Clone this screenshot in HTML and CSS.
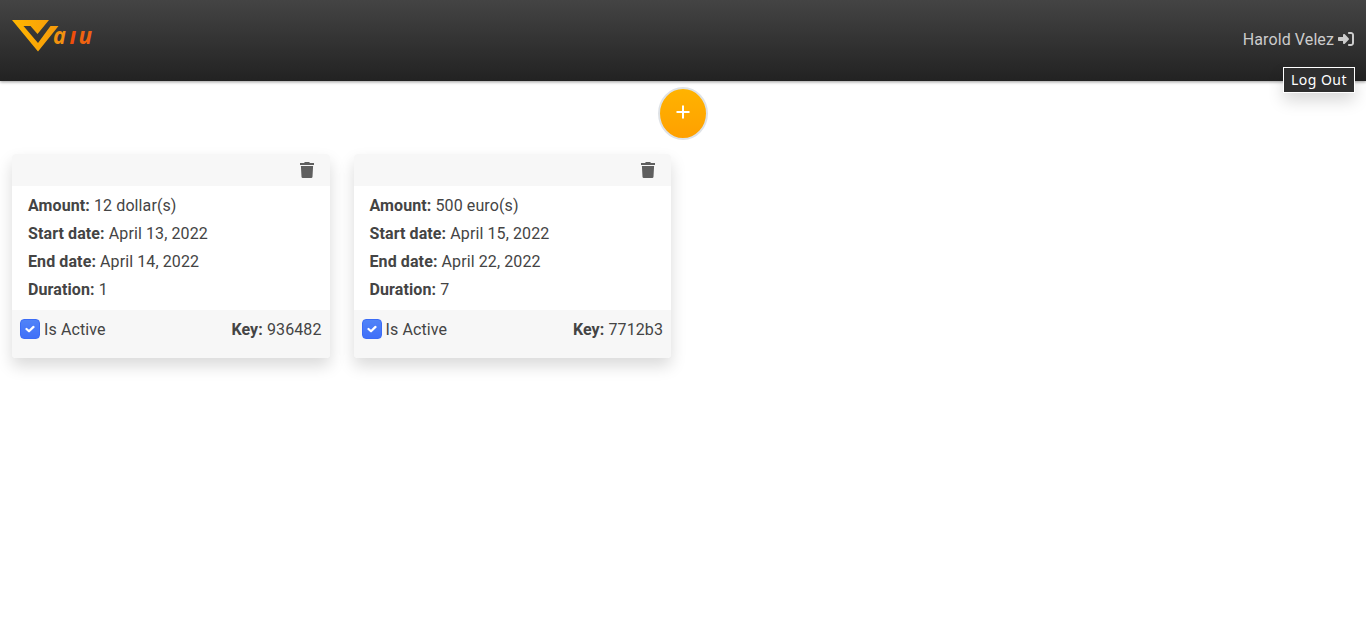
FILE: index.html
```html
<!DOCTYPE html>
<html lang="en">
<head>
<meta charset="utf-8">
<title>Vaiu</title>
<link rel="stylesheet" href="styles.css">
</head>
<body>
<header class="topbar">
  <svg class="logo" width="84" height="36" viewBox="0 0 84 36" role="img" aria-label="Vaiu">
    <defs>
      <linearGradient id="gold" x1="0" y1="0" x2="1" y2="0"><stop offset="0" stop-color="#ffb700"/><stop offset="1" stop-color="#f79a0a"/></linearGradient>
    </defs>
    <path fill="url(#gold)" d="M0 2H37L25.5 16 18.5 8H11.5L26 25 38.5 8H46.500L26 33.500Z"/>
    <text class="logo-text" y="26"><tspan x="41" fill="#f2910f" textLength="13" lengthAdjust="spacingAndGlyphs">a</tspan><tspan x="57.500" fill="#f04e0a">ı</tspan><tspan x="66.500" fill="#ef6310">u</tspan></text>
  </svg>
  <div class="account">
    <span>Harold Velez</span>
    <svg class="exit" width="16" height="16" viewBox="0 0 512 512"><path fill="currentColor" d="M217.900 105.900L340.700 228.700c7.200 7.200 11.300 17.100 11.300 27.300s-4.100 20.100-11.300 27.300L217.900 406.100c-6.400 6.400-15 9.900-24 9.900c-18.700 0-33.900-15.200-33.900-33.900V320H32c-17.700 0-32-14.300-32-32v-64c0-17.700 14.300-32 32-32h128v-62.100c0-18.700 15.200-33.900 33.900-33.900c9 0 17.600 3.600 24 9.900zM352 416h64c17.700 0 32-14.300 32-32V128c0-17.700-14.300-32-32-32h-64c-17.700 0-32-14.300-32-32s14.300-32 32-32h64c53 0 96 43 96 96v256c0 53-43 96-96 96h-64c-17.700 0-32-14.300-32-32s14.300-32 32-32z"/></svg>
    <div class="tooltip">Log Out</div>
  </div>
</header>
<main>
  <div class="actions">
    <button class="add" aria-label="Add"><svg width="14" height="14" viewBox="0 0 14 14"><path d="M7 .5V13.500M.5 7H13.500" stroke="#fff" stroke-width="2"/></svg></button>
  </div>
  <section class="grid">
    <article class="card">
      <div class="card-head"><svg width="14" height="16" viewBox="0 0 14 16"><path fill="currentColor" d="M0 1H4.200L4.700 0H9.300L9.800 1H14V3H0ZM.9 4H13.100L12.500 14.700Q12.400 16 11.200 16H2.800Q1.600 16 1.500 14.700Z"/></svg></div>
      <div class="card-body">
        <p><b>Amount:</b> 12 dollar(s)</p>
        <p><b>Start date:</b> April 13, 2022</p>
        <p><b>End date:</b> April 14, 2022</p>
        <p><b>Duration:</b> 1</p>
      </div>
      <div class="card-foot">
        <div class="active"><span class="check"><svg width="10" height="8" viewBox="0 0 10 8"><path d="M1.500 4 4 6.300 8.500 1.900"/></svg></span>Is Active</div>
        <div><b>Key:</b> 936482</div>
      </div>
    </article>
    <article class="card">
      <div class="card-head"><svg width="14" height="16" viewBox="0 0 14 16"><path fill="currentColor" d="M0 1H4.200L4.700 0H9.300L9.800 1H14V3H0ZM.9 4H13.100L12.500 14.700Q12.400 16 11.200 16H2.800Q1.600 16 1.500 14.700Z"/></svg></div>
      <div class="card-body">
        <p><b>Amount:</b> 500 euro(s)</p>
        <p><b>Start date:</b> April 15, 2022</p>
        <p><b>End date:</b> April 22, 2022</p>
        <p><b>Duration:</b> 7</p>
      </div>
      <div class="card-foot">
        <div class="active"><span class="check"><svg width="10" height="8" viewBox="0 0 10 8"><path d="M1.500 4 4 6.300 8.500 1.900"/></svg></span>Is Active</div>
        <div><b>Key:</b> 7712b3</div>
      </div>
    </article>
  </section>
</main>
</body>
</html>
```
FILE: styles.css
```css
* { box-sizing: border-box; }
body { margin: 0; min-height: 100vh; background: #fff; color: #444; font: 16px/24px Roboto, sans-serif; letter-spacing: .1px; }
p { margin: 0; }
.topbar {
  display: flex; justify-content: space-between; align-items: flex-start;
  height: 81px; padding: 18px 12px 0;
  background: linear-gradient(#444, #222);
  box-shadow: 0 1px 3px rgba(0, 0, 0, .4);
}
.logo-text { font: italic bold 22.5px "Open Sans", sans-serif; }
.account { position: relative; display: flex; align-items: center; gap: 4px; margin-top: 9px; color: #ccc; }
.account > span { padding-top: 1px; }
.exit { margin-bottom: 2px; }
.tooltip {
  position: absolute; top: 40px; right: -1px; width: 72px; height: 26px;
  border: 1px solid #fff; background: #2f2f2f; color: #fff;
  font: 14px/24px "Noto Sans", sans-serif; letter-spacing: .45px; text-align: center; white-space: nowrap;
  box-shadow: 0 8px 16px rgba(0, 0, 0, .15);
}
.actions { display: flex; justify-content: center; padding-top: 6px; }
.add {
  display: flex; align-items: center; justify-content: center;
  width: 50px; height: 53px; padding: 0 0 3px; border: 2px solid #dee2e6; border-radius: 50%;
  background: linear-gradient(#ffb300, #ffa000);
}
.grid { display: grid; grid-template-columns: repeat(4, 1fr); column-gap: 24px; padding: 14px 12px 40px; }
.card { overflow: hidden; border-radius: 4px; background: #fff; box-shadow: 0 8px 16px rgba(0, 0, 0, .15); }
.card-head { display: flex; justify-content: flex-end; align-items: center; height: 32px; padding: 0 16px; background: #f7f7f7; color: #5f5f5f; }
.card-body { display: grid; gap: 4px; padding: 8px 16px; }
.card-foot { display: flex; justify-content: space-between; height: 48px; padding: 8px; background: #f7f7f7; }
.active { display: flex; align-items: flex-start; gap: 4px; }
.check {
  display: flex; align-items: center; justify-content: center;
  width: 20px; height: 20px; margin-top: 1px; border: 1px solid #3b6cf6; border-radius: 4px;
  background: linear-gradient(#5083f8, #4070f8);
}
.check path { fill: none; stroke: #fff; stroke-width: 2.2; stroke-linecap: round; stroke-linejoin: round; }
```
